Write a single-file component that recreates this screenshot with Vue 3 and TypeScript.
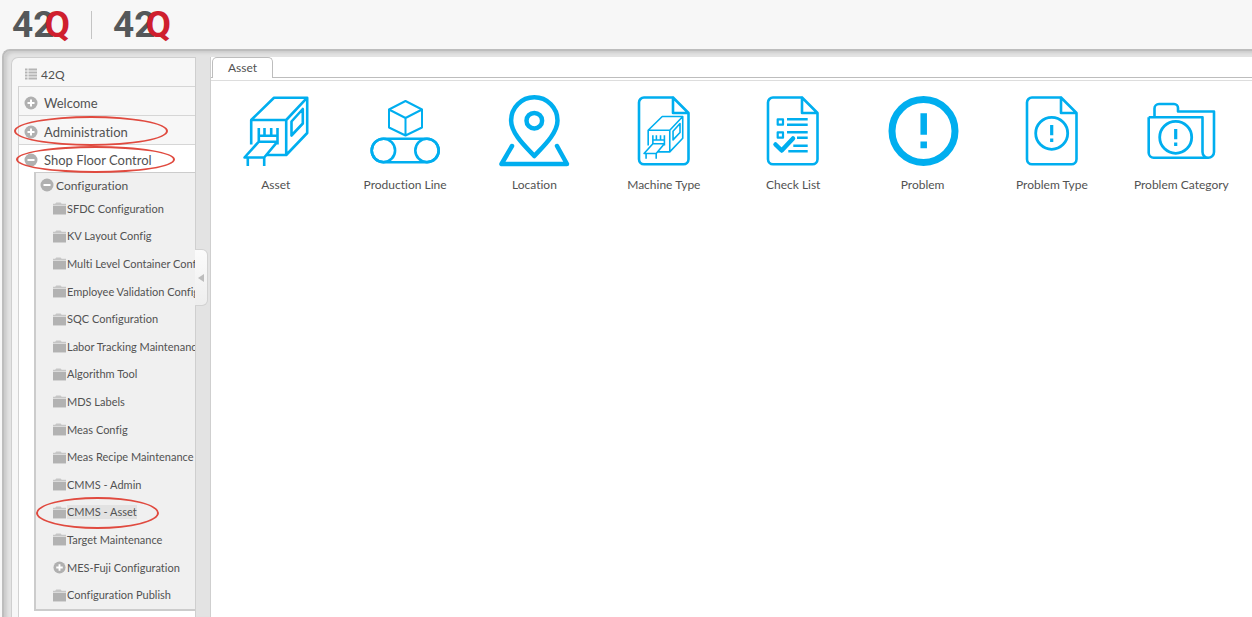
<script setup lang="ts">
import { ref } from 'vue'

type IconName =
  | 'asset' | 'line' | 'location' | 'machine'
  | 'checklist' | 'problem' | 'problemType' | 'problemCategory'

interface Tile { label: string; icon: IconName }
interface TreeLeaf { label: string; expandable?: boolean; current?: boolean }

const tiles: Tile[] = [
  { label: 'Asset', icon: 'asset' },
  { label: 'Production Line', icon: 'line' },
  { label: 'Location', icon: 'location' },
  { label: 'Machine Type', icon: 'machine' },
  { label: 'Check List', icon: 'checklist' },
  { label: 'Problem', icon: 'problem' },
  { label: 'Problem Type', icon: 'problemType' },
  { label: 'Problem Category', icon: 'problemCategory' },
]

const leaves: TreeLeaf[] = [
  { label: 'SFDC Configuration' },
  { label: 'KV Layout Config' },
  { label: 'Multi Level Container Config' },
  { label: 'Employee Validation Config' },
  { label: 'SQC Configuration' },
  { label: 'Labor Tracking Maintenance' },
  { label: 'Algorithm Tool' },
  { label: 'MDS Labels' },
  { label: 'Meas Config' },
  { label: 'Meas Recipe Maintenance' },
  { label: 'CMMS - Admin' },
  { label: 'CMMS - Asset', current: true },
  { label: 'Target Maintenance' },
  { label: 'MES-Fuji Configuration', expandable: true },
  { label: 'Configuration Publish' },
]

const collapsed = ref(false)
const pagePath = 'M49 6.5H20a5 5 0 0 0-5 5V68.3a5 5 0 0 0 5 5H59.5a5 5 0 0 0 5-5V22L49 6.5V22H64.5'
const machinePath =
  'M15.2 53.5V29L38 6.7H71.2V42L50.2 64H29.5M15.2 29H50.2V64M50.2 29L71.2 6.7' +
  'M55.5 30.5L66.8 18V32.5L55.5 44.5zM22.8 37V50.5M28.5 37V44.5M35.2 37V44.5M41.5 37V53.5' +
  'M22.8 44.7H41.5M22.8 50.7H41.5L28.2 66.5H8.5zM11.8 66.5V75M28.2 66.5V75'
</script>

<template>
  <div class="page">
    <header class="top">
      <a class="logo" href="#" aria-label="42Q home"><span>42</span><span class="q">Q</span></a>
      <span class="rule"></span>
      <a class="logo" href="#" aria-label="42Q site"><span>42</span><span class="q">Q</span></a>
    </header>

    <div class="shell">
      <aside class="side">
        <nav v-show="!collapsed" class="nav" aria-label="Modules">
          <div class="root">
            <svg class="list-icon" viewBox="0 0 12 12" aria-hidden="true">
              <path d="M0 1.5H2.5M0 4.5H2.5M0 7.5H2.5M0 10.5H2.5M3.5 1.5H12M3.5 4.5H12M3.5 7.5H12M3.5 10.5H12" stroke="#b5b5b5" stroke-width="2" />
            </svg>
            <span>42Q</span>
          </div>
          <div class="tree">
            <button class="branch" type="button">
              <svg class="round" viewBox="0 0 14 14" aria-hidden="true"><circle cx="7" cy="7" r="6.5" /><path d="M3.5 7H10.5M7 3.5V10.5" /></svg>
              Welcome
            </button>
            <button class="branch" type="button">
              <svg class="round" viewBox="0 0 14 14" aria-hidden="true"><circle cx="7" cy="7" r="6.5" /><path d="M3.5 7H10.5M7 3.5V10.5" /></svg>
              Administration
              <span class="ring ring-admin"></span>
            </button>
            <button class="branch open" type="button" aria-expanded="true">
              <svg class="round" viewBox="0 0 14 14" aria-hidden="true"><circle cx="7" cy="7" r="6.5" /><path d="M3.5 7H10.5" /></svg>
              Shop Floor Control
              <span class="ring ring-shop"></span>
            </button>
            <div class="group">
              <button class="sub" type="button" aria-expanded="true">
                <svg class="round" viewBox="0 0 14 14" aria-hidden="true"><circle cx="7" cy="7" r="6.5" /><path d="M3.5 7H10.5" /></svg>
                Configuration
              </button>
              <ul class="leaves">
                <li v-for="leaf in leaves" :key="leaf.label">
                  <a class="leaf" :class="{ current: leaf.current }" href="#">
                    <svg v-if="leaf.expandable" class="round small" viewBox="0 0 14 14" aria-hidden="true"><circle cx="7" cy="7" r="6.5" /><path d="M3.5 7H10.5M7 3.5V10.5" /></svg>
                    <svg v-else class="folder" viewBox="0 0 12 12" aria-hidden="true">
                      <path d="M0 3V1.5H2L3 .5H7L8 1.5H12V3z" fill="#c6c6c6" />
                      <path d="M0 3.5H12V11.5H0z" fill="#b2b2b2" />
                    </svg>
                    <span class="name">{{ leaf.label }}</span>
                    <span v-if="leaf.current" class="ring ring-asset"></span>
                  </a>
                </li>
              </ul>
            </div>
          </div>
        </nav>
        <button class="handle" type="button" aria-label="Toggle navigation" @click="collapsed = !collapsed">
          <svg viewBox="0 0 6 8" aria-hidden="true"><path d="M6 0V8L0 4z" fill="#bdbdbd" /></svg>
        </button>
      </aside>

      <main class="main">
        <div class="tabs" role="tablist">
          <button class="tab" type="button" role="tab" aria-selected="true">Asset</button>
        </div>
        <div class="tiles">
          <a v-for="tile in tiles" :key="tile.label" class="tile" href="#">
            <svg class="art" viewBox="0 0 80 80" aria-hidden="true">
              <path v-if="tile.icon === 'asset'" :d="machinePath" />
              <g v-else-if="tile.icon === 'line'">
                <path d="M40.5 10L57 18.5V36.5L40.5 44.5L24 36.5V18.5zM24 18.5L40.5 27L57 18.5M40.5 27V44.5" stroke-width="2" />
                <rect x="6.7" y="47.7" width="67" height="23.5" rx="11.7" />
                <circle cx="18.4" cy="59.4" r="11.7" />
                <circle cx="62" cy="59.4" r="11.7" />
              </g>
              <g v-else-if="tile.icon === 'location'" stroke-width="4.5" stroke-linecap="round">
                <path d="M40.3 65C33 57 17.1 43 17.1 29.5a23.2 23.2 0 0 1 46.4 0C63.5 43 47.5 57 40.3 65z" />
                <circle cx="40.3" cy="29.7" r="7.8" />
                <path d="M18 55L7.5 73H73L63 55" />
              </g>
              <g v-else-if="tile.icon === 'machine'">
                <path :d="pagePath" />
                <path :d="machinePath" transform="translate(14.8 21.4) scale(.617)" />
              </g>
              <g v-else-if="tile.icon === 'checklist'">
                <path :d="pagePath" />
                <path d="M24.7 28.3H30V33.7H24.7zM24.7 41.3H30V46.7H24.7z" stroke-width="2.2" />
                <path d="M34 28.3H54.7M34 33.7H54.7M34 41.3H54.7M44 46.7H54.7M40.3 54.7H54.7M35.3 60.3H54.7" />
                <path d="M22.5 53.5L28.7 59.5L40 47.5" stroke-width="4.5" stroke-linecap="round" />
              </g>
              <g v-else-if="tile.icon === 'problem'">
                <circle cx="40.5" cy="40" r="31.5" stroke-width="7" />
                <path d="M40.7 22.3V43.7M40.7 50.5V57.3" stroke-width="6.5" />
              </g>
              <g v-else-if="tile.icon === 'problemType'">
                <path :d="pagePath" />
                <circle cx="39.7" cy="42.3" r="16" stroke-width="2.8" />
                <path d="M39.7 34V44.3M39.7 47.5V51" stroke-width="3.2" />
              </g>
              <g v-else>
                <path d="M7.7 26.3H61.5V61a5.7 5.7 0 0 0 11.5 0V20.5H37V17a4 4 0 0 0-4-4H18a4.5 4.5 0 0 0-4.5 4.5V26.3M7.7 26.3V62a5 5 0 0 0 5 4.7H67" />
                <circle cx="34.7" cy="46.3" r="16" stroke-width="2.8" />
                <path d="M34.7 38V48.3M34.7 51.5V55" stroke-width="3.2" />
              </g>
            </svg>
            <span>{{ tile.label }}</span>
          </a>
        </div>
      </main>
    </div>
  </div>
</template>

<style>
body {
  margin: 0;
  background: #f7f7f7;
}
</style>

<style scoped>
.page {
  box-sizing: border-box;
  display: flex;
  flex-direction: column;
  height: 100vh;
  overflow: hidden;
  background: #f7f7f7;
  color: #525252;
  font-family: "Trebuchet MS", Lato, "Open Sans", sans-serif;
  font-size: 12px;
  font-variant-ligatures: none;
}
a {
  color: inherit;
  text-decoration: none;
}
button {
  border: 0;
  padding: 0;
  background: none;
  color: inherit;
  font: inherit;
  font-variant-ligatures: none;
  text-align: left;
  cursor: pointer;
}
.top {
  display: flex;
  flex: none;
  align-items: center;
  height: 49px;
  padding-left: 12px;
}
.logo {
  display: flex;
  color: #55585a;
  font: bold 37px/49px Roboto, sans-serif;
}
.logo .q {
  margin-left: -10px;
  color: #cf1f2e;
}
.rule {
  width: 1px;
  height: 28px;
  margin: 0 21px;
  background: #c4c4c4;
}
.shell {
  box-sizing: border-box;
  display: flex;
  flex: 1;
  min-height: 0;
  margin-left: 2px;
  padding: 6px 0 0 7px;
  border: solid #bdbdbd;
  border-width: 2px 0 0 2px;
  border-top-left-radius: 8px;
  background: #e3e3e3;
  box-shadow: inset 3px 2px 3px #cccccc;
}
.side {
  position: relative;
  flex: none;
  width: 199px;
}
.nav {
  box-sizing: border-box;
  width: 185px;
  height: 100%;
  overflow: hidden;
  border: solid #cfcfcf;
  border-width: 1px 1px 0 1px;
  border-top-left-radius: 7px;
  background: #f7f7f7;
}
.root {
  box-sizing: border-box;
  display: flex;
  align-items: center;
  gap: 4px;
  height: 28px;
  padding: 4px 0 0 13px;
  font-size: 12px;
}
.list-icon {
  width: 12px;
  height: 12px;
}
.tree {
  height: 100%;
  margin-left: 6px;
  border-left: 1px solid #d2d2d2;
  background: #ffffff;
}
.branch {
  position: relative;
  box-sizing: border-box;
  display: flex;
  align-items: center;
  gap: 6px;
  width: 100%;
  height: 29px;
  padding: 3px 0 0 5px;
  border-top: 1px solid #d6d6d6;
  background: #f7f7f7;
  font-size: 13px;
  white-space: nowrap;
}
.branch.open {
  height: 28px;
  background: #ffffff;
}
.round {
  flex: none;
  width: 14px;
  height: 14px;
}
.round circle {
  fill: #b0b0b0;
}
.round path {
  stroke: #ffffff;
  stroke-width: 2;
}
.group {
  margin-left: 15px;
  border: solid #cccccc;
  border-width: 1px 0 2px 2px;
  background: #f0f0f0;
}
.sub {
  display: flex;
  align-items: center;
  gap: 2px;
  width: 100%;
  height: 22px;
  padding: 2px 0 0 4px;
  font-size: 12px;
}
.leaves {
  display: grid;
  grid-auto-rows: 1fr;
  height: 414px;
  margin: 0;
  padding: 0 0 0 17px;
  list-style: none;
  font-size: 11px;
}
.leaf {
  position: relative;
  display: flex;
  align-items: center;
  gap: 1px;
  height: 100%;
  white-space: nowrap;
}
.folder,
.round.small {
  flex: none;
  width: 13px;
  height: 13px;
}
.name {
  line-height: 14px;
}
.current .name {
  background: #e2e2e2;
}
.ring {
  position: absolute;
  z-index: 1;
  box-sizing: border-box;
  border: 2px solid #e04a3f;
  border-radius: 50%;
  pointer-events: none;
}
.ring-admin {
  top: 0;
  left: -5px;
  width: 154px;
  height: 30px;
}
.ring-shop {
  top: 1px;
  left: -3px;
  width: 159px;
  height: 27px;
}
.ring-asset {
  top: -2px;
  left: -17px;
  width: 123px;
  height: 32px;
}
.handle {
  position: absolute;
  top: 192px;
  right: 2px;
  display: flex;
  align-items: center;
  justify-content: center;
  width: 13px;
  height: 57px;
  border: solid #d2d2d2;
  border-width: 1px 1px 1px 0;
  border-radius: 0 6px 6px 0;
  background: linear-gradient(#fbfbfb, #eeeeee);
}
.handle svg {
  width: 6px;
  height: 8px;
}
.main {
  flex: 1;
  min-width: 0;
  border-left: 1px solid #cfcfcf;
  background: #ffffff;
}
.tabs {
  display: flex;
  height: 20px;
  padding-left: 1px;
  border-bottom: 1px solid #bdbdbd;
  box-shadow: 0 2px 0 #ffffff, 0 3px 0 #dddddd;
}
.tab {
  box-sizing: border-box;
  height: 21px;
  padding: 0 15px 2px;
  border: 1px solid #bdbdbd;
  border-bottom: 0;
  border-radius: 5px 5px 0 0;
  background: #ffffff;
}
.tiles {
  display: grid;
  grid-template-columns: repeat(8, 1fr);
  padding: 13px 6px 0 0;
}
.tile {
  display: flex;
  flex-direction: column;
  align-items: center;
  line-height: 28px;
  white-space: nowrap;
}
.art {
  width: 80px;
  height: 80px;
  fill: none;
  stroke: #00aeef;
  stroke-width: 2.6px;
  stroke-linejoin: round;
}
</style>
